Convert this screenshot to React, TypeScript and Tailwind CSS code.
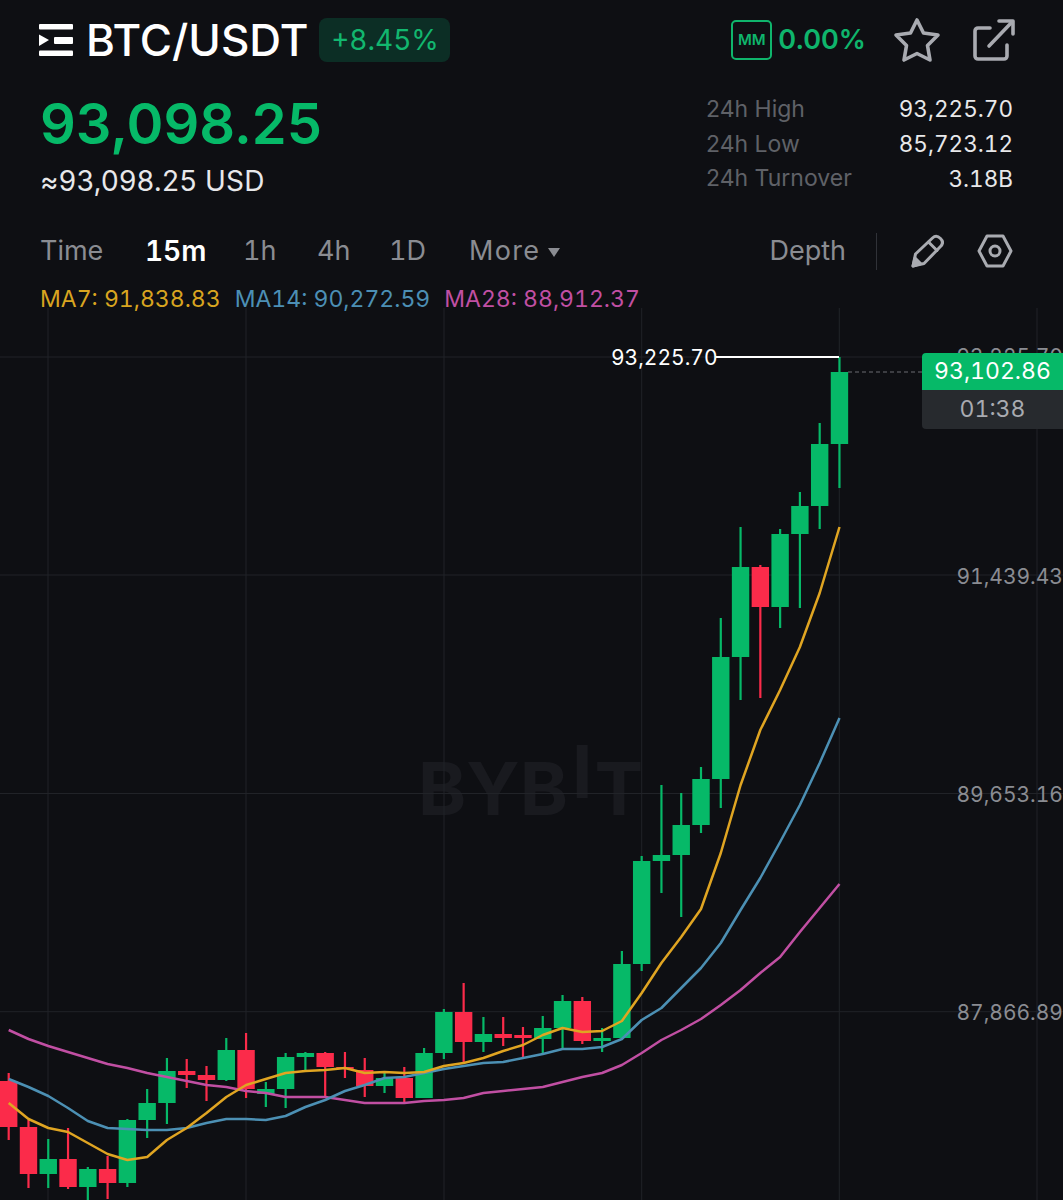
import React from 'react';

// [bodyTop, bodyBottom, wickTop, wickBottom, up]
const candles: [number, number, number, number, boolean][] = [
  [1081, 1127, 1073, 1140, false],
  [1127, 1174, 1120, 1188, false],
  [1159, 1174, 1139, 1188, true],
  [1159, 1187, 1128, 1189, false],
  [1169, 1187, 1167, 1200, true],
  [1169, 1183, 1156, 1199, false],
  [1120, 1183, 1119, 1187, true],
  [1103, 1120, 1089, 1138, true],
  [1071, 1103, 1058, 1124, true],
  [1071, 1075, 1059, 1088, false],
  [1075, 1080, 1066, 1101, false],
  [1050, 1080, 1038, 1081, true],
  [1050, 1089, 1033, 1098, false],
  [1089, 1094, 1082, 1107, true],
  [1057, 1089, 1053, 1108, true],
  [1053, 1057, 1052, 1071, true],
  [1053, 1067, 1052, 1097, false],
  [1067, 1069, 1052, 1078, false],
  [1070, 1086, 1058, 1097, false],
  [1078, 1086, 1073, 1093, true],
  [1078, 1098, 1067, 1103, false],
  [1053, 1098, 1048, 1098, true],
  [1012, 1053, 1009, 1059, true],
  [1012, 1042, 983, 1062, false],
  [1034, 1042, 1017, 1052, true],
  [1034, 1038, 1017, 1046, false],
  [1035, 1038, 1027, 1057, false],
  [1028, 1039, 1016, 1053, true],
  [1001, 1028, 995, 1050, true],
  [1001, 1041, 997, 1044, false],
  [1038, 1041, 1028, 1052, true],
  [964, 1038, 951, 1038, true],
  [861, 964, 856, 971, true],
  [855, 861, 785, 893, true],
  [825, 855, 793, 917, true],
  [779, 825, 767, 833, true],
  [657, 779, 618, 808, true],
  [567, 657, 527, 700, true],
  [567, 607, 565, 698, false],
  [534, 607, 529, 628, true],
  [506, 534, 492, 608, true],
  [444, 506, 423, 529, true],
  [372, 444, 357, 488, true],
];

const ma7 = [1103, 1119, 1128, 1132, 1143, 1154, 1160, 1157, 1140, 1128, 1113, 1097, 1085, 1079, 1073, 1071, 1070, 1068, 1073, 1072, 1073, 1072, 1066, 1063, 1058, 1051, 1045, 1035, 1028, 1032, 1031, 1021, 993, 963, 937, 909, 853, 785, 730, 690, 647, 593, 527];
const ma14 = [1079, 1087, 1096, 1108, 1121, 1128, 1129, 1130, 1130, 1128, 1123, 1119, 1119, 1120, 1116, 1107, 1100, 1091, 1085, 1078, 1077, 1073, 1069, 1066, 1063, 1062, 1058, 1054, 1049, 1049, 1047, 1039, 1020, 1008, 988, 968, 943, 910, 878, 842, 805, 763, 718];
const ma28 = [1030, 1039, 1046, 1052, 1058, 1064, 1068, 1073, 1077, 1081, 1085, 1087, 1091, 1093, 1097, 1097, 1097, 1100, 1103, 1103, 1103, 1101, 1100, 1098, 1093, 1091, 1089, 1087, 1082, 1077, 1073, 1065, 1053, 1040, 1030, 1019, 1005, 990, 973, 957, 932, 908, 884];

const cx = (i: number) => 8.7 + i * 19.78;
const line = (ys: number[]) => ys.map((y, i) => `${cx(i).toFixed(1)},${y}`).join(' ');

function Chart() {
  return (
    <svg viewBox="0 308 1063 892" className="absolute inset-0 h-full w-full">
      {[48, 246, 444, 641.7, 839.3, 1037].map((x) => (
        <line key={x} x1={x} x2={x} y1={308} y2={1200} stroke="#212328" strokeWidth="1" />
      ))}
      {[357, 575, 793.5, 1011.7].map((y) => (
        <line key={y} x1={0} x2={1063} y1={y} y2={y} stroke="#212328" strokeWidth="1" />
      ))}
      {candles.map(([top, bottom, wickTop, wickBottom, up], i) => {
        const color = up ? '#06b968' : '#fb2b4a';
        return (
          <g key={i} fill={color}>
            <rect x={cx(i) - 1.1} y={wickTop} width="2.2" height={wickBottom - wickTop} />
            <rect x={cx(i) - 8.7} y={top} width="17.4" height={bottom - top} />
          </g>
        );
      })}
      <polyline points={line(ma28)} fill="none" stroke="#c14fa3" strokeWidth="2.5" strokeLinejoin="round" />
      <polyline points={line(ma14)} fill="none" stroke="#4c90b4" strokeWidth="2.5" strokeLinejoin="round" />
      <polyline points={line(ma7)} fill="none" stroke="#e0a522" strokeWidth="2.5" strokeLinejoin="round" />
      <line x1={716} x2={839} y1={357} y2={357} stroke="#ffffff" strokeWidth="2" />
      <line x1={848} x2={922} y1={372} y2={372} stroke="#6b6d73" strokeWidth="1" strokeDasharray="4 3" />
    </svg>
  );
}

function Logo() {
  return (
    <svg viewBox="0 0 34 32" className="h-[32px] w-[34px] shrink-0" fill="#ffffff">
      <rect x="0" y="0" width="34" height="5.5" rx="1" />
      <path d="M0 10.5 L10 16 L0 22 Z" />
      <rect x="15" y="13" width="19" height="7" rx="1" />
      <rect x="0" y="26.5" width="34" height="5.5" rx="1" />
    </svg>
  );
}

function StarIcon() {
  return (
    <svg viewBox="0 0 48 46" className="h-[46px] w-[48px]" fill="none" stroke="#a9abb1" strokeWidth="3.6" strokeLinejoin="round">
      <path d="M24 3 L30.5 16 L45 18 L34.5 28.5 L37 43 L24 36.5 L11 43 L13.5 28.5 L3 18 L17.5 16 Z" />
    </svg>
  );
}

function ShareIcon() {
  return (
    <svg viewBox="0 0 42 42" className="h-[42px] w-[42px]" fill="none" stroke="#a9abb1" strokeWidth="3.6" strokeLinecap="round" strokeLinejoin="round">
      <path d="M17 9 H5 a3 3 0 0 0 -3 3 V37 a3 3 0 0 0 3 3 H31 a3 3 0 0 0 3 -3 V26" />
      <path d="M16 27 L39 3" />
      <path d="M26 2 H40 V15" />
    </svg>
  );
}

function PencilIcon() {
  return (
    <svg viewBox="0 0 34 34" className="h-[34px] w-[34px]" fill="none" stroke="#a9abb1" strokeWidth="3" strokeLinejoin="round" strokeLinecap="round">
      <path d="M3 32 L5.5 20 L22.5 4 C25 1.6 28 2 30.5 4.5 C33 7 33 10 30.5 12.5 L14 29.5 Z" />
      <path d="M18.5 8 L27 16.5" />
      <path d="M3 32 L5 24 L10.5 29.5 Z" fill="#a9abb1" />
    </svg>
  );
}

function HexIcon() {
  return (
    <svg viewBox="0 0 36 34" className="h-[34px] w-[36px]" fill="none" stroke="#a9abb1" strokeWidth="3" strokeLinejoin="round">
      <path d="M10 2 H26 L34 17 L26 32 H10 L2 17 Z" />
      <circle cx="18" cy="17" r="5" />
    </svg>
  );
}

function Stat({ label, value }: { label: string; value: string }) {
  return (
    <div className="flex h-[34.7px] items-center justify-between">
      <span className="text-[23px] text-[#5f6167]">{label}</span>
      <span className="text-[22.5px] tabular-nums text-[#e8e8ea]">{value}</span>
    </div>
  );
}

export default function App() {
  return (
    <div className="flex h-[1200px] w-[1063px] flex-col overflow-hidden bg-[#0e0f13] font-['Inter','Noto_Sans',sans-serif]">
      {/* symbol row */}
      <div className="flex h-[62px] shrink-0 items-end justify-between pl-[39px] pr-[48px]">
        <div className="flex h-[44px] items-center">
          <Logo />
          <span className="ml-[13px] text-[44px] font-medium leading-none text-white">BTC/USDT</span>
          <span className="ml-[11px] flex h-[44px] w-[131px] items-center justify-center rounded-[8px] bg-[#0c2e25] text-[28px] tabular-nums text-[#12b76f]">+8.45%</span>
        </div>
        <div className="flex h-[44px] items-center">
          <span className="flex h-[40px] w-[41px] items-center justify-center rounded-[5px] border-2 border-[#0fb56c] text-[15px] font-semibold text-[#0fb56c]">MM</span>
          <span className="ml-[6px] text-[27px] font-semibold text-[#0fb56c]">0.00%</span>
          <span className="ml-[27px] flex"><StarIcon /></span>
          <span className="ml-[32px] flex"><ShareIcon /></span>
        </div>
      </div>

      {/* price + 24h stats */}
      <div className="flex h-[166px] shrink-0 justify-between pl-[40px] pr-[50px]">
        <div className="flex flex-col">
          <span className="mt-[29px] h-[66px] text-[56px] font-semibold leading-[66px] text-[#06b968]">93,098.25</span>
          <span className="mt-[5px] text-[28px] leading-[38px] tracking-[0.3px] text-[#e8e8ea]">≈93,098.25 USD</span>
        </div>
        <div className="mt-[30px] flex w-[307px] flex-col">
          <Stat label="24h High" value="93,225.70" />
          <Stat label="24h Low" value="85,723.12" />
          <Stat label="24h Turnover" value="3.18B" />
        </div>
      </div>

      {/* timeframe tabs */}
      <div className="flex h-[46px] shrink-0 items-center justify-between pl-[40px] pr-[50px]">
        <div className="flex items-center text-[27px] tabular-nums text-[#8a8c92]">
          <span className="w-[105px]">Time</span>
          <span className="w-[98px] text-[28px] font-semibold text-white">15m</span>
          <span className="w-[74px]">1h</span>
          <span className="w-[72px]">4h</span>
          <span className="w-[80px]">1D</span>
          <span className="tracking-[1.3px]">More</span>
          <span className="ml-[8px] mt-[3px] h-0 w-0 border-x-[6px] border-t-[9px] border-x-transparent border-t-[#8a8c92]" />
        </div>
        <div className="flex items-center">
          <span className="text-[27px] text-[#8a8c92]">Depth</span>
          <span className="ml-[30px] h-[37px] w-px bg-[#303238]" />
          <span className="ml-[33px] flex"><PencilIcon /></span>
          <span className="ml-[33px] flex"><HexIcon /></span>
        </div>
      </div>

      {/* moving average legend */}
      <div className="relative z-10 -mb-[16px] flex h-[50px] shrink-0 items-center gap-[14px] pl-[40px] text-[23px] tabular-nums">
        <span className="text-[#d9a520]">MA7: 91,838.83</span>
        <span className="text-[#4c8fb5]">MA14: 90,272.59</span>
        <span className="text-[#c14fa3]">MA28: 88,912.37</span>
      </div>

      {/* chart */}
      <div className="relative flex-1">
        <div className="absolute left-[418px] top-[446px] flex items-start text-[73px] font-bold leading-[70px] text-[#191a1f]">
          <span>BYB</span>
          <span className="-mt-[17px] ml-[4px]">I</span>
          <span className="ml-[2px]">T</span>
        </div>
        <Chart />
        <span className="absolute left-[611px] top-[50px] -translate-y-1/2 text-[21px] tabular-nums text-white">93,225.70</span>
        <span className="absolute right-0 top-[49px] -translate-y-1/2 whitespace-nowrap text-[21px] tabular-nums text-[#8a8c92]">93,225.70</span>
        <span className="absolute right-0 top-[269px] -translate-y-1/2 whitespace-nowrap text-[21px] tabular-nums text-[#8a8c92]">91,439.43</span>
        <span className="absolute right-0 top-[487px] -translate-y-1/2 whitespace-nowrap text-[21px] tabular-nums text-[#8a8c92]">89,653.16</span>
        <span className="absolute right-0 top-[705px] -translate-y-1/2 whitespace-nowrap text-[21px] tabular-nums text-[#8a8c92]">87,866.89</span>
        <div className="absolute left-[922px] right-0 top-[45px] flex flex-col text-center">
          <span className="flex h-[37px] items-center justify-center rounded-tl-[4px] bg-[#06b968] text-[23px] tabular-nums text-white">93,102.86</span>
          <span className="flex h-[39px] items-center justify-center rounded-bl-[4px] bg-[#272a2e] text-[23px] tabular-nums text-[#a9abb1]">01:38</span>
        </div>
      </div>
    </div>
  );
}
